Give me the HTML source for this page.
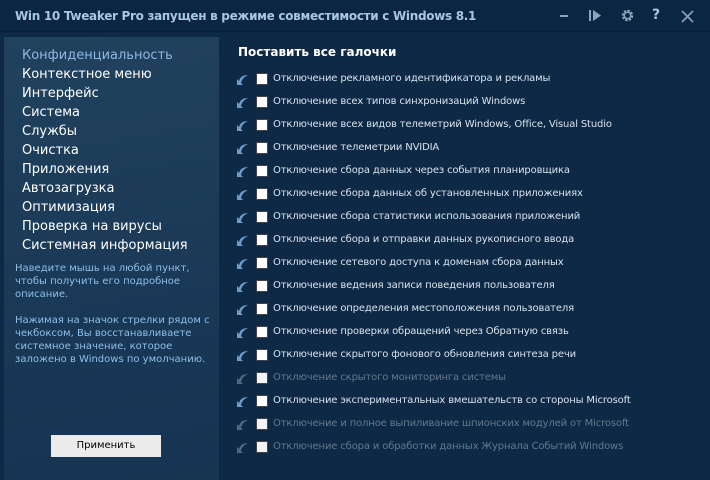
<!DOCTYPE html>
<html><head><meta charset="utf-8"><style>
*{margin:0;padding:0;box-sizing:border-box}
body{width:710px;height:480px;overflow:hidden;background:#0e2946;font-family:"Liberation Sans","DejaVu Sans",sans-serif;position:relative}
.title{position:absolute;left:0;top:0;width:710px;height:32px;background:#0b2643;border-bottom:1px solid #0a1e33}
.title span{position:absolute;left:15px;top:9px;color:#a9c6e0;font-size:12px;font-weight:bold;font-family:"DejaVu Sans",sans-serif;letter-spacing:-0.3px}
.left{position:absolute;left:4px;top:37px;width:215px;height:443px;background:linear-gradient(170deg,#21425f 0%,#1a3a58 50%,#163352 100%)}
.menu{position:absolute;left:22px;top:46px;font-size:13px;font-family:"DejaVu Sans",sans-serif;color:#fff;line-height:19px}
.menu div:first-child{color:#8fb8e0}
.help{position:absolute;left:15px;top:262px;width:200px;font-size:10px;line-height:13px;color:#8fbfe8;font-family:"DejaVu Sans",sans-serif}
.btn{position:absolute;left:51px;top:435px;width:110px;height:22px;background:#ebebeb;color:#000;font-size:10px;text-align:center;line-height:22px;font-family:"DejaVu Sans",sans-serif}
.all{position:absolute;left:238px;top:45px;color:#fff;font-weight:bold;font-size:12px;font-family:"DejaVu Sans",sans-serif}
.row{position:absolute;left:234px;height:20px;font-size:10px;font-family:"DejaVu Sans",sans-serif;color:#d8e2ec;white-space:nowrap}
.row.d{color:#64788c}
.row svg{position:absolute;left:0;top:2px}
.row i{position:absolute;left:22px;top:2px;width:12px;height:12px;background:#fff;border:1px solid #444}
.row.d i{background:#f2f4f7}
.row b{font-weight:normal;position:absolute;left:39px;top:2px;letter-spacing:-0.15px}
.ic{position:absolute;color:#8fa3b8;font-size:15px}
</style></head><body>
<div class="title"><span>Win 10 Tweaker Pro запущен в режиме совместимости с Windows 8.1</span>
<div style="position:absolute;left:560px;top:15px;width:8px;height:2px;background:#8fa3b8"></div>
<svg style="position:absolute;left:589px;top:9px" width="14" height="14"><rect x="0" y="1" width="2" height="11" fill="#8fa3b8"/><path d="M4 1L12 6.5L4 12Z" fill="#8fa3b8"/></svg>
<svg style="position:absolute;left:620px;top:8px" width="15" height="15" viewBox="0 0 15 15"><circle cx="7.5" cy="7.5" r="4.5" fill="none" stroke="#8fa3b8" stroke-width="2.5" stroke-dasharray="2.2 1.3"/><circle cx="7.5" cy="7.5" r="3.2" fill="none" stroke="#8fa3b8" stroke-width="1.5"/></svg>
<span class="ic" style="left:652px;top:7px;font-weight:bold;font-size:14px">?</span>
<svg style="position:absolute;left:681px;top:10px" width="13" height="13"><path d="M1 1L12 12M12 1L1 12" stroke="#8fa3b8" stroke-width="1.6"/></svg>
</div>
<div class="left"></div>
<div class="menu"><div>Конфиденциальность</div><div>Контекстное меню</div><div>Интерфейс</div><div>Система</div><div>Службы</div><div>Очистка</div><div>Приложения</div><div>Автозагрузка</div><div>Оптимизация</div><div>Проверка на вирусы</div><div>Системная информация</div></div>
<div class="help">Наведите мышь на любой пункт,<br>чтобы получить его подробное<br>описание.<br><br>Нажимая на значок стрелки рядом с<br>чекбоксом, Вы восстанавливаете<br>системное значение, которое<br>заложено в Windows по умолчанию.</div>
<div class="btn">Применить</div>
<div class="all">Поставить все галочки</div>
<div id="rows"></div>
<script>
var t=[["Отключение рекламного идентификатора и рекламы",0],["Отключение всех типов синхронизаций Windows",0],["Отключение всех видов телеметрий Windows, Office, Visual Studio",0],["Отключение телеметрии NVIDIA",0],["Отключение сбора данных через события планировщика",0],["Отключение сбора данных об установленных приложениях",0],["Отключение сбора статистики использования приложений",0],["Отключение сбора и отправки данных рукописного ввода",0],["Отключение сетевого доступа к доменам сбора данных",0],["Отключение ведения записи поведения пользователя",0],["Отключение определения местоположения пользователя",0],["Отключение проверки обращений через Обратную связь",0],["Отключение скрытого фонового обновления синтеза речи",0],["Отключение скрытого мониторинга системы",1],["Отключение экспериментальных вмешательств со стороны Microsoft",0],["Отключение и полное выпиливание шпионских модулей от Microsoft",1],["Отключение сбора и обработки данных Журнала Событий Windows",1]];
var h="";t.forEach(function(r,i){var c=r[1]?"#51677d":"#6a9ccc";h+='<div class="row'+(r[1]?' d':'')+'" style="top:'+(71+i*23)+'px"><svg width="16" height="14" viewBox="0 0 16 14"><path d="M14 2C9 2 6 4 5 8L3 6L3 12L9 12L7 10C8 6 10 4 14 2Z" fill="'+c+'"/></svg><i></i><b>'+r[0]+'</b></div>'});
document.getElementById("rows").innerHTML=h;
</script>
</body></html>
